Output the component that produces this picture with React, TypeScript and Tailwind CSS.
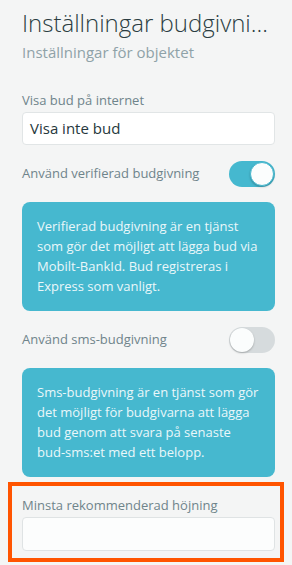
import React from "react";

function Toggle({ on }: { on: boolean }) {
  return (
    <div
      className={
        "relative w-[46px] h-[26px] rounded-full shrink-0 " +
        (on ? "bg-[#45b8cf]" : "bg-[#d6dbdd]")
      }
    >
      <div
        className={
          "absolute top-[1px] w-[24px] h-[24px] rounded-full bg-[#fbfdfd] shadow-[0_1px_2px_rgba(0,0,0,0.25)] " +
          (on ? "left-[21px] border border-[#45b8cf]" : "left-[1px]")
        }
      />
    </div>
  );
}

export default function App() {
  return (
    <div
      className="w-[292px] h-[565px] bg-[#f4f5f5] overflow-hidden"
      style={{ fontFamily: '"Open Sans", "Noto Sans", sans-serif' }}
    >
      <div className="pl-[22px] pr-[17px] pt-[7px]">
        <div className="text-[24px] leading-[32px] font-light text-[#2b3d42] whitespace-nowrap overflow-hidden text-ellipsis pr-[6px]">
          Inställningar budgivningar
        </div>
        <div className="mt-[3px] text-[15px] leading-[20px] text-[#8fa2a8]">
          Inställningar för objektet
        </div>
        <div className="mt-[29px] text-[13px] leading-[18px] text-[#6f848b]">
          Visa bud på internet
        </div>
        <div className="mt-[3px] h-[33px] bg-white border border-[#e1e5e6] rounded-[4px] flex items-center px-[7px] text-[15px] text-[#26373c]">
          Visa inte bud
        </div>
        <div className="mt-[16px] flex items-center justify-between">
          <span className="text-[13px] text-[#6f848b]">Använd verifierad budgivning</span>
          <Toggle on={true} />
        </div>
        <div className="mt-[15px] bg-[#46b8cf] rounded-[8px] pl-[15px] pr-[12px] pt-[14px] pb-[15px] text-[13px] leading-[20px] text-[#eaf7fa]">
          Verifierad budgivning är en tjänst som gör det möjligt att lägga bud via Mobilt-BankId. Bud registreras i Express som vanligt.
        </div>
        <div className="mt-[16px] flex items-center justify-between">
          <span className="text-[13px] text-[#6f848b]">Använd sms-budgivning</span>
          <Toggle on={false} />
        </div>
        <div className="mt-[15px] bg-[#46b8cf] rounded-[8px] pl-[15px] pr-[12px] pt-[14px] pb-[15px] text-[13px] leading-[20px] text-[#eaf7fa]">
          Sms-budgivning är en tjänst som gör det möjligt för budgivarna att lägga bud genom att svara på senaste{" "}
          <span className="whitespace-nowrap">bud-sms:et</span> med ett belopp.
        </div>
      </div>
      <div className="mt-[5px] ml-[8px] w-[276px] border-[4px] border-[#ff5400] pl-[10px] pr-[5px] pt-[10px] pb-[7px]">
        <div className="text-[13px] leading-[18px] text-[#6f848b]">Minsta rekommenderad höjning</div>
        <div className="mt-[3px] h-[34px] bg-[#fcfdfd] border border-[#dfe3e4] rounded-[4px]" />
      </div>
    </div>
  );
}
